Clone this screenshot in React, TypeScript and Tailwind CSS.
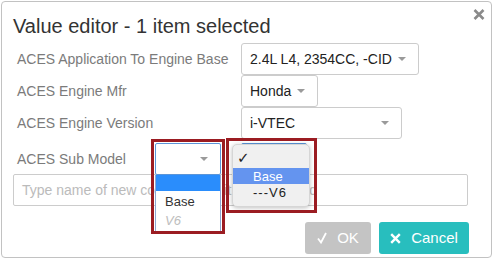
import React from 'react';

const Caret = () => (
    <span className="inline-block w-0 h-0 border-l-[4px] border-r-[4px] border-t-[4px] border-l-transparent border-r-transparent border-t-[#9a9a9a]" />
);

const Label = ({ children, width }: { children: React.ReactNode; width: string }) => (
    <div className={`${width} pl-[4px] text-[14px] leading-[16px] text-[#7b7b7b]`}>{children}</div>
);

export default function App() {
    return (
        <div className="w-[493px] h-[260px] bg-white p-[1px] font-['Liberation_Sans',Arial,sans-serif]">
            <div className="relative w-[491px] h-[257px] border border-[#c2c2c2] rounded-[4px] bg-white pl-[11px]">
                {/* close */}
                <svg className="absolute right-[6px] top-[7px]" width="12" height="11" viewBox="0 0 12 11">
                    <path d="M1.5 1 L10.5 10 M10.5 1 L1.5 10" stroke="#8a8a8a" strokeWidth="2.6" strokeLinecap="butt" />
                </svg>

                <h1 className="pt-[12px] text-[20px] leading-[24px] text-[#333]">Value editor - 1 item selected</h1>

                <div className="mt-[5px] flex flex-col">
                    <div className="flex items-center h-[32px]">
                        <Label width="w-[228px]">ACES Application To Engine Base</Label>
                        <div className="flex items-center h-[32px] border border-[#cccccc] rounded-[3px] pl-[8px] pr-[12px] text-[14px] leading-[16px] text-[#222]">
                            <span>2.4L L4, 2354CC, -CID</span>
                            <span className="ml-[6px] flex"><Caret /></span>
                        </div>
                    </div>
                    <div className="flex items-center h-[32px]">
                        <Label width="w-[228px]">ACES Engine Mfr</Label>
                        <div className="flex items-center h-[32px] border border-[#cccccc] rounded-[3px] pl-[8px] pr-[12px] text-[14px] leading-[16px] text-[#222]">
                            <span>Honda</span>
                            <span className="ml-[6px] flex"><Caret /></span>
                        </div>
                    </div>
                    <div className="flex items-center h-[32px]">
                        <Label width="w-[228px]">ACES Engine Version</Label>
                        <div className="flex items-center justify-between w-[161px] h-[32px] border border-[#cccccc] rounded-[3px] pl-[8px] pr-[12px] text-[14px] leading-[16px] text-[#222]">
                            <span>i-VTEC</span>
                            <Caret />
                        </div>
                    </div>

                    <div className="flex items-center h-[32px] mt-[4px]">
                        <Label width="w-[142px]">ACES Sub Model</Label>

                        {/* html select with its open list */}
                        <div className="relative z-10 w-[66px] h-[32px]">
                            <div className="flex items-center justify-end h-[32px] border border-[#5b95d8] rounded-[2px] pr-[12px] bg-white">
                                <Caret />
                            </div>
                            <div className="absolute left-0 top-[32px] w-[66px] h-[57px] border-x border-b border-[#8ea6d2] bg-white text-[13px] leading-[15px]">
                                <div className="h-[16px] bg-[#2a8dfc]" />
                                <div className="h-[21px] flex items-center pl-[9px] text-[#333]">Base</div>
                                <div className="h-[17px] flex items-center pl-[9px] italic text-[#bdbdbd]">V6</div>
                            </div>
                            <div className="absolute left-[-4px] top-[-4px] w-[74px] h-[95px] border-[3px] border-[#9b1c22]" />
                        </div>

                        {/* native popup */}
                        <div className="relative z-10 w-[66px] h-[32px] ml-[20px]">
                            <div className="h-[32px] border border-[#5b95d8] rounded-[2px] bg-white" />
                            <div className="absolute left-[-9px] top-[1px] w-[78px] h-[63px] rounded-[5px] bg-[#f0f0f0] border border-[#d6d6d6] shadow-[0_1px_4px_rgba(0,0,0,0.25)] pt-[3px] text-[13px] leading-[15px] text-[#222]">
                                <div className="h-[20px] flex items-center pl-[4px] text-[15px] leading-[16px] font-['DejaVu_Sans',sans-serif] font-bold">✓</div>
                                <div className="h-[16px] flex items-center pl-[20px] bg-[#6494ef] text-white">Base</div>
                                <div className="h-[16px] flex items-center pl-[20px] tracking-[1px]">---V6</div>
                            </div>
                            <div className="absolute left-[-15px] top-[-5px] w-[91px] h-[75px] border-[3px] border-[#9b1c22]" />
                        </div>
                    </div>
                </div>

                {/* new value input, sits under the open lists */}
                <div className="mt-[-1px] w-[455px] h-[32px] border border-[#cccccc] rounded-[2px] flex items-center pl-[8px] text-[14px] leading-[16px] text-[#bbbbbb] overflow-hidden whitespace-nowrap">
                    Type name of new constant and it will be added
                </div>

                <div className="mt-[16px] w-[456px] flex justify-end gap-[8px]">
                    <button className="w-[66px] h-[32px] rounded-[3px] bg-[#c4c4c4] text-white text-[15px] leading-[18px] flex items-center justify-center gap-[10px]">
                        <svg width="10" height="12" viewBox="0 0 10 12">
                            <path d="M1 6.5 L4 10.5 L9 1" stroke="white" strokeWidth="1.8" fill="none" />
                        </svg>
                        <span>OK</span>
                    </button>
                    <button className="w-[90px] h-[32px] rounded-[3px] bg-[#28bebe] text-white text-[15px] leading-[18px] flex items-center justify-center gap-[10px]">
                        <svg width="11" height="11" viewBox="0 0 11 11">
                            <path d="M1.2 1.2 L9.8 9.8 M9.8 1.2 L1.2 9.8" stroke="white" strokeWidth="2.4" />
                        </svg>
                        <span>Cancel</span>
                    </button>
                </div>
            </div>
        </div>
    );
}
